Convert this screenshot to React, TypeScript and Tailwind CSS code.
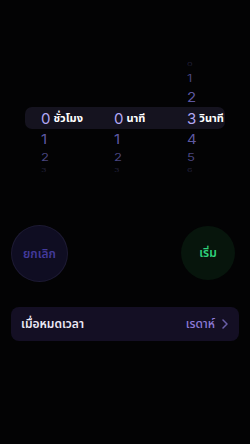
const thai = "font-['Noto_Sans_Thai','Noto_Sans','Liberation_Sans',sans-serif]";

const Num = ({ v, cls }: { v: string; cls: string }) => (
  <span className={`font-['Inter',sans-serif] ${cls}`}>{v}</span>
);

const Cell = ({ v, cls }: { v?: string; cls: string }) => (
  <div className="pl-[16px] flex items-center">{v ? <Num v={v} cls={cls} /> : null}</div>
);

const Row = ({ vals, h, cls }: { vals: (string | undefined)[]; h: string; cls: string }) => (
  <div className={`grid grid-cols-[73px_73px_54px] mx-[25px] ${h}`}>
    {vals.map((v, i) => (
      <Cell key={i} v={v} cls={cls} />
    ))}
  </div>
);

export default function App() {
  return (
    <div className={`w-[250px] h-[444px] bg-[#030304] flex flex-col ${thai}`}>
      <div className="h-[58px]" />
      <Row vals={[undefined, undefined, "0"]} h="h-[12px]" cls="text-[9px] leading-none text-[#6a63b8]/30 scale-y-50" />
      <Row vals={[undefined, undefined, "1"]} h="h-[17px]" cls="text-[13px] leading-none text-[#6a63b8]/70 scale-y-75" />
      <Row vals={[undefined, undefined, "2"]} h="h-[20px]" cls="text-[15px] leading-none text-[#6a63b8]/90 scale-y-90" />
      <div className="mx-[25px] h-[22px] rounded-[7px] bg-[#15131f] grid grid-cols-[73px_73px_54px] items-center">
        {[
          ["0", "ชั่วโมง"],
          ["0", "นาที"],
          ["3", "วินาที"],
        ].map(([n, l]) => (
          <div key={l} className="pl-[16px] flex items-center gap-[3px] whitespace-nowrap">
            <span className="font-['Inter',sans-serif] text-[15px] leading-none text-[#b3a8f5]">{n}</span>
            <span className="text-[11px] font-bold leading-none text-white">{l}</span>
          </div>
        ))}
      </div>
      <Row vals={["1", "1", "4"]} h="h-[20px]" cls="text-[15px] leading-none text-[#6a63b8]/90 scale-y-90" />
      <Row vals={["2", "2", "5"]} h="h-[16px]" cls="text-[13px] leading-none text-[#6a63b8]/70 scale-y-75" />
      <Row vals={["3", "3", "6"]} h="h-[11px]" cls="text-[9px] leading-none text-[#6a63b8]/30 scale-y-50" />

      <div className="flex justify-between px-[12px] mt-[50px]">
        <div className="w-[55px] h-[55px] rounded-full bg-[#0f0d22] ring-1 ring-[#1d1a33] flex items-center justify-center">
          <span className="text-[12px] font-semibold text-[#433a9c]">ยกเลิก</span>
        </div>
        <div className="w-[54px] h-[54px] rounded-full bg-[#07150c] flex items-center justify-center mr-[3px]">
          <span className="text-[12px] font-semibold text-[#2fd27c]">เริ่ม</span>
        </div>
      </div>

      <div className="mx-[11px] mt-[26px] h-[34px] rounded-[8px] bg-[#140f24] flex items-center justify-between pl-[10px] pr-[11px]">
        <span className="text-[12px] font-semibold text-[#ece9f5]">เมื่อหมดเวลา</span>
        <div className="flex items-center gap-[7px]">
          <span className="text-[12px] font-medium text-[#8c7ad8]">เรดาห์</span>
          <svg width="6" height="10" viewBox="0 0 6 10" fill="none">
            <path d="M1 1l4 4-4 4" stroke="#6a5fa8" strokeWidth="1.5" strokeLinecap="round" strokeLinejoin="round" />
          </svg>
        </div>
      </div>
    </div>
  );
}
